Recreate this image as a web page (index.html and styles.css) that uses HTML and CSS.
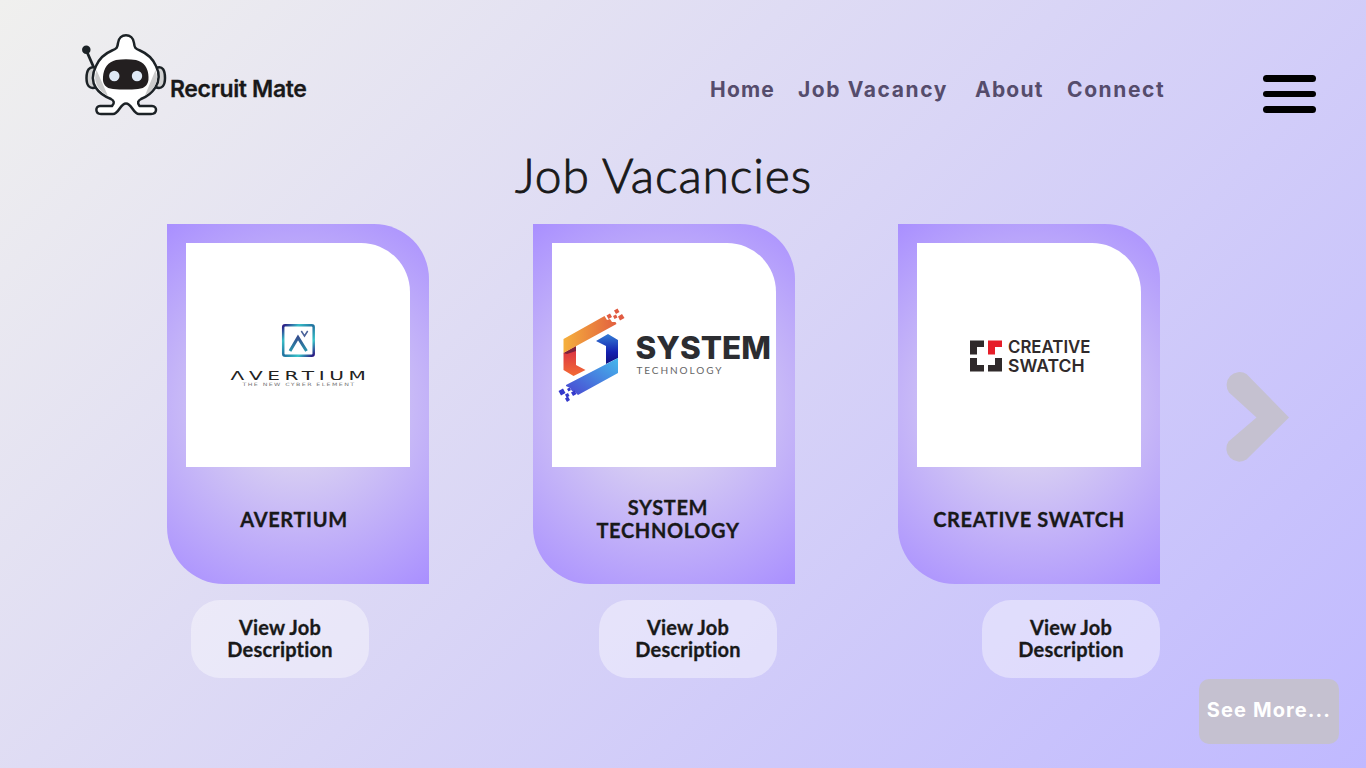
FILE: index.html
```html
<!DOCTYPE html>
<html lang="en">
<head>
<meta charset="utf-8">
<title>Recruit Mate</title>
<link rel="stylesheet" href="styles.css">
</head>
<body>
<div class="page">
  <header class="header">
    <a class="brand">
      <svg class="robot" width="90" height="90" viewBox="0 0 90 90">
        <g stroke="#1c2226" stroke-width="2.5" stroke-linejoin="round" stroke-linecap="round">
          <path d="M7 20L14 36" stroke-width="2.8"/>
          <circle cx="6.300" cy="17.800" r="3" fill="#1c2226"/>
          <path d="M16 36C9 33 6.500 39 6.500 46S9 58 17 55z" fill="#d2d2d2"/>
          <path d="M76 36C83 33 85 39 85 46S82.500 58 75 55z" fill="#d2d2d2"/>
          <path d="M38 11C39 0.500 53 0.500 54 11C54.500 15.500 55 16.500 60 18.500C67 21.500 73 27 76 34C80 42 79 50 75 56C71 62 66 65 61 67C58 68.500 57 71 59.500 74H72C77.500 74 77.500 82 71 82H59C53 82 52 71.500 46 71.500S39 82 33 82H21C15 82 15 74 20 74H32C35 71 34 68.500 31 67C26 65 20 62 16 56C12 50 12 42 16 34C19 27 25 21.500 32 18.500C37 16.500 37.500 15.500 38 11z" fill="#fff"/>
        </g>
        <path d="M16.500 38L28 64Q11 54 16.500 38zM75.500 38L65 63.500Q81 54 75.500 38z" fill="#cbcbcb"/>
        <path d="M36 28Q46 26.500 56 28Q68 31 68.500 45Q69 56 58 57Q46 58 33 57Q22 56 23 45Q24 31 36 28z" fill="#231f20"/>
        <circle cx="34.300" cy="44" r="5.200" fill="#dfe9f5"/><circle cx="57" cy="44" r="5.200" fill="#dfe9f5"/>
      </svg>
      <span class="brand-name">Recruit Mate</span>
    </a>
    <nav class="nav"><a>Home</a><a class="wide">Job Vacancy</a><a>About</a><a class="wide">Connect</a></nav>
    <div class="menu"><span></span><span></span><span></span></div>
  </header>
  <h1 class="title">Job Vacancies</h1>
  <main class="vacancies">
    <section class="vacancy">
      <div class="card">
        <div class="picture">
          <svg width="224" height="224" viewBox="0 0 224 224">
            <defs>
              <linearGradient id="frame" x1="0" y1="0" x2="1" y2="1"><stop offset="0" stop-color="#2b1682"/><stop offset=".25" stop-color="#37bdc7"/><stop offset=".5" stop-color="#216f9e"/><stop offset=".75" stop-color="#37c4c9"/><stop offset="1" stop-color="#29117f"/></linearGradient>
              <linearGradient id="mark" x1="0" y1="0" x2="0" y2="1"><stop offset="0" stop-color="#35508f"/><stop offset="1" stop-color="#2793ac"/></linearGradient>
            </defs>
            <rect x="97.200" y="82.200" width="30.500" height="30.500" rx="2" fill="none" stroke="url(#frame)" stroke-width="2.500"/>
            <path d="M104 108L112 94.500L120.500 108" fill="none" stroke="url(#mark)" stroke-width="3"/>
            <path d="M115.300 88L118.500 93L121.700 88" fill="none" stroke="#4b6299" stroke-width="1.500"/>
            <text class="wide-logo" x="44.500" y="136.500" textLength="140" lengthAdjust="spacingAndGlyphs">ΛVERTIUM</text>
            <text class="tagline" x="56.500" y="143" textLength="113" lengthAdjust="spacingAndGlyphs">THE NEW CYBER ELEMENT</text>
          </svg>
        </div>
        <h2 class="company">AVERTIUM</h2>
      </div>
      <button class="view">View Job<br>Description</button>
    </section>
    <section class="vacancy second">
      <div class="card">
        <div class="picture">
          <svg width="224" height="224" viewBox="0 0 224 224">
            <defs>
              <linearGradient id="orange"><stop offset="0" stop-color="#f5b03d"/><stop offset="1" stop-color="#e2603f"/></linearGradient>
              <linearGradient id="red" x2="0" y2="1"><stop offset="0" stop-color="#d82c45"/><stop offset="1" stop-color="#f36b35"/></linearGradient>
              <linearGradient id="navy" x2="0" y2="1"><stop offset="0" stop-color="#347dd5"/><stop offset=".6" stop-color="#1421b0"/><stop offset="1" stop-color="#121080"/></linearGradient>
              <linearGradient id="blue" x1="0" y1="1" x2="1" y2="0"><stop offset="0" stop-color="#4a45d1"/><stop offset="1" stop-color="#44b8ec"/></linearGradient>
            </defs>
            <path d="M11.500 110L24 103V122L33.500 127L21.500 133L11.500 127z" fill="url(#red)"/>
            <path d="M11.500 110L24 103V108L15 111z" fill="#7d213c"/>
            <path d="M11.500 96L52.500 73L55 77L58 76L60 79L63.500 79L64.500 81L11.500 110z" fill="url(#orange)"/>
            <path d="M44 98L56 91L66 97V115L54 121V103z" fill="url(#navy)"/>
            <path d="M66 115V130L26 152L23 149L20 148L18 145L14 143V142z" fill="url(#blue)"/>
            <path d="M54.500 72.500l3.500-2 2 3.500-3.500 2zM62 67.500l3.500-2 2 3.500-3.500 2zM66 73.500l4-2.500 2.500 4-4.500 2.500zM61 73l3-1.500 1.500 3-3 1.500z" fill="#e05b42"/>
            <path d="M6.500 148l4.500-2.500 2.500 4.500-4.500 2.500zM13 151.500l3-1.500 1.500 3-3 1.500zM19 149.500l3.500-2 2 3.500-3.500 2zM13 155.500l3-2 2 3.500-3 2zM15 146l2.500-1.500 1.500 2.500-2.500 1.500z" fill="#3439cb"/>
            <text class="system" x="83.500" y="116" textLength="135.500" lengthAdjust="spacingAndGlyphs">SYSTEM</text>
            <text class="technology" x="84.500" y="130.500" textLength="85" lengthAdjust="spacing">TECHNOLOGY</text>
          </svg>
        </div>
        <h2 class="company">SYSTEM<br>TECHNOLOGY</h2>
      </div>
      <button class="view">View Job<br>Description</button>
    </section>
    <section class="vacancy third">
      <div class="card">
        <div class="picture">
          <svg width="224" height="224" viewBox="0 0 224 224">
            <path d="M53 97.500H67V104H60V111.500H53zM53 115H60V122H67V128.500H53zM85 115H78V122H71V128.500H85z" fill="#302a2b"/>
            <path d="M71 97.500H85V104H78V111.500H71z" fill="#e61e29"/>
            <text class="creative" x="91" y="110" textLength="82.500" lengthAdjust="spacingAndGlyphs">CREATIVE</text>
            <text class="creative" x="91" y="128.500" textLength="76.500" lengthAdjust="spacingAndGlyphs">SWATCH</text>
          </svg>
        </div>
        <h2 class="company">CREATIVE SWATCH</h2>
      </div>
      <button class="view">View Job<br>Description</button>
    </section>
    <svg class="next" width="64" height="94" viewBox="0 0 64 94"><path d="M4 22.500A13 13 0 0 1 21.500 4L64 47.500L21.500 89.500A13 13 0 0 1 3.500 71.500L31.500 47.500z" fill="#c5c1d0"/></svg>
  </main>
  <footer class="footer"><button class="more">See More...</button></footer>
</div>
</body>
</html>
```
FILE: styles.css
```css
* { box-sizing: border-box; }
body { margin: 0; }
.page {
  width: 1366px;
  height: 768px;
  overflow: hidden;
  display: flex;
  flex-direction: column;
  background: linear-gradient(135deg, #f0f0ee 0%, #d9d5f6 50%, #c0b9ff 100%);
  color: #191919;
  font-family: Lato, "Open Sans", sans-serif;
}
.header { display: flex; height: 150px; padding: 32px 50px 0 80px; }
.brand { display: flex; width: 630px; }
.brand-name { margin-top: 43px; font: 600 23px/28px Inter, sans-serif; letter-spacing: -0.35px; -webkit-text-stroke: 0.3px #191919; }
.nav {
  display: grid;
  grid-template-columns: 88px 177px 92px 196px;
  padding-top: 43px;
  font: 700 21px/29px Inter, sans-serif;
  letter-spacing: 1.2px;
  color: #554c6c;
  white-space: nowrap;
}
.nav .wide { letter-spacing: 1.6px; }
.menu { display: flex; flex-direction: column; gap: 9px; width: 53px; padding-top: 43px; }
.menu span { height: 6.7px; border-radius: 4px; background: #000; }
.title {
  height: 74px;
  margin: 0;
  padding: 0 0 0 515px;
  font-size: 48px;
  font-weight: 300;
  line-height: 50px;
  letter-spacing: 0.85px;
  -webkit-text-stroke: 0.9px #191919;
  white-space: nowrap;
}
.vacancies { display: flex; height: 455px; padding-left: 167px; }
.vacancy { width: 262px; margin-right: 104px; }
.second { margin-right: 103px; }
.third { margin-right: 65px; }
.card {
  height: 360px;
  padding: 19px;
  border-radius: 0 55px 0 57px;
  background: radial-gradient(circle farthest-corner, #e8e5ee, #a98fff);
}
.picture { height: 224px; border-radius: 0 49px 0 0; background: #fff; overflow: hidden; }
.picture svg { display: block; }
.company {
  display: flex;
  align-items: center;
  justify-content: center;
  height: 105px;
  margin: 0 8px 0 0;
  font-size: 20px;
  font-weight: 700;
  line-height: 23px;
  letter-spacing: 0.65px;
  -webkit-text-stroke: 0.3px #191919;
  text-align: center;
  white-space: nowrap;
}
.second .company { height: 103px; margin-right: -8px; }
.third .company { margin-right: 0; }
button { display: block; padding: 0; border: 0; }
.view {
  width: 178px;
  height: 78px;
  margin: 16px 0 0 24px;
  padding-bottom: 3px;
  border-radius: 29px;
  background: rgba(255, 255, 255, 0.4);
  color: #191919;
  font: 700 20px/22px Lato, sans-serif;
  font-variant-ligatures: none;
  letter-spacing: 0.2px;
  -webkit-text-stroke: 0.3px #191919;
}
.second .view { margin-left: 66px; }
.third .view { margin-left: 84px; }
.next { margin-top: 146px; flex: none; }
.footer { padding-left: 1199px; }
.more {
  width: 140px;
  height: 65px;
  padding-bottom: 3px;
  border-radius: 10px;
  background: #c5c1d0;
  color: #fff;
  font: 700 20px/60px Inter, sans-serif;
  letter-spacing: 1.1px;
}
.wide-logo { font: 400 13px "DejaVu Sans", sans-serif; letter-spacing: 3px; fill: #222; }
.tagline { font: 400 4.5px "DejaVu Sans", sans-serif; letter-spacing: 1px; fill: #777; }
.system { font: 800 31px Inter, sans-serif; fill: #2c2d31; }
.technology { font: 400 10px Lato, sans-serif; fill: #666; }
.creative { font: 600 17.5px Inter, sans-serif; fill: #302a2b; }
```
